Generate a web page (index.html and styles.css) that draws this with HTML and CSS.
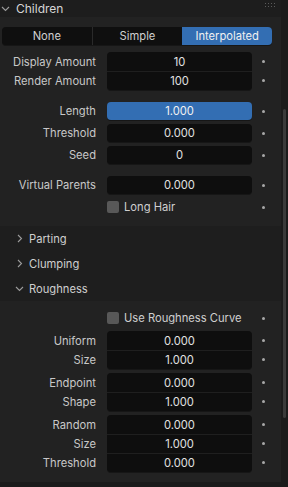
FILE: index.html
```html
<!DOCTYPE html>
<html lang="en">
  <head>
    <meta charset="UTF-8" />
    <title>Children</title>
    <link rel="stylesheet" href="styles.css">
  </head>
  <body>
    <div class="region">
      <div class="panel">
        <!-- Children header -->
        <div class="panel-header">
          <svg class="chev-down" width="9" height="6" viewBox="0 0 9 6"><path d="M1 1 L4.5 4.5 L8 1" /></svg>
          <span class="panel-title">Children</span>
          <div class="grip">
            <span></span><span></span><span></span><span></span>
            <span></span><span></span><span></span><span></span>
          </div>
        </div>

        <div class="panel-body">
          <div class="seg">
            <div class="seg-item">None</div>
            <div class="seg-item">Simple</div>
            <div class="seg-item active">Interpolated</div>
          </div>

          <div class="stack first-stack">
            <div class="row"><div class="label">Display Amount</div><div class="field">10</div><div class="dot"></div></div>
            <div class="row"><div class="label">Render Amount</div><div class="field">100</div><div class="dot"></div></div>
          </div>

          <div class="single gap-big"><div class="label">Length</div><div class="field blue">1.000</div><div class="dot"></div></div>
          <div class="single"><div class="label">Threshold</div><div class="field">0.000</div><div class="dot"></div></div>
          <div class="single"><div class="label">Seed</div><div class="field">0</div><div class="dot"></div></div>

          <div class="single gap-big"><div class="label">Virtual Parents</div><div class="field">0.000</div><div class="dot"></div></div>
          <div class="single check-row"><div class="label"></div><div class="check"><span class="box"></span>Long Hair</div><div class="dot"></div></div>
        </div>

        <!-- Subpanels -->
        <div class="sub-header">
          <svg class="chev-right" width="6" height="9" viewBox="0 0 6 9"><path d="M1 1 L4.5 4.5 L1 8" /></svg>
          <span>Parting</span>
        </div>
        <div class="sub-header">
          <svg class="chev-right" width="6" height="9" viewBox="0 0 6 9"><path d="M1 1 L4.5 4.5 L1 8" /></svg>
          <span>Clumping</span>
        </div>
        <div class="sub-header open">
          <svg class="chev-down sub" width="9" height="6" viewBox="0 0 9 6"><path d="M1 1 L4.5 4.5 L8 1" /></svg>
          <span>Roughness</span>
        </div>

        <div class="sub-body">
          <div class="single check-row first"><div class="label"></div><div class="check"><span class="box"></span>Use Roughness Curve</div><div class="dot"></div></div>

          <div class="stack">
            <div class="row"><div class="label">Uniform</div><div class="field">0.000</div><div class="dot"></div></div>
            <div class="row"><div class="label">Size</div><div class="field">1.000</div><div class="dot"></div></div>
          </div>
          <div class="stack">
            <div class="row"><div class="label">Endpoint</div><div class="field">0.000</div><div class="dot"></div></div>
            <div class="row"><div class="label">Shape</div><div class="field">1.000</div><div class="dot"></div></div>
          </div>
          <div class="stack">
            <div class="row"><div class="label">Random</div><div class="field">0.000</div><div class="dot"></div></div>
            <div class="row"><div class="label">Size</div><div class="field">1.000</div><div class="dot"></div></div>
            <div class="row"><div class="label">Threshold</div><div class="field">0.000</div><div class="dot"></div></div>
          </div>
        </div>
      </div>

      <div class="scrollbar"></div>
    </div>
  </body>
</html>
```

FILE: styles.css
```css
* {
  margin: 0;
  padding: 0;
  box-sizing: border-box;
}

body {
  background: #1b1b1b;
  font-family: Inter, 'DejaVu Sans', sans-serif;
  font-size: 11.2px;
  color: #cfcfcf;
}

.region {
  position: relative;
  width: 288px;
  height: 487px;
  background: #1b1b1b;
  overflow: hidden;
}

.panel {
  width: 281px;
  background: #222222;
}

.panel-header {
  height: 17px;
  background: #1d1d1d;
  display: flex;
  align-items: center;
  position: relative;
}

.panel-title {
  margin-left: 6px;
  font-size: 12px;
  color: #d6d6d6;
}

.chev-down {
  margin-left: 1px;
  fill: none;
  stroke: #9c9c9c;
  stroke-width: 1.1;
}

.chev-down.sub {
  margin-left: 15px;
}

.chev-right {
  margin-left: 17px;
  fill: none;
  stroke: #9c9c9c;
  stroke-width: 1.1;
}

.grip {
  position: absolute;
  right: 6px;
  top: 3px;
  display: grid;
  grid-template-columns: repeat(4, 1px);
  gap: 2px 2px;
}

.grip span {
  width: 1px;
  height: 1px;
  background: #5a5a5a;
}

.panel-body {
  padding: 10px 0 10px 0;
  height: 209px;
  background: #222222;
}

.seg {
  margin: 0 9px 0 2px;
  height: 18px;
  display: flex;
  border-radius: 4px;
  background: #0f0f0f;
  box-shadow: 0 1px 0 #161616;
  overflow: hidden;
}

.seg-item {
  flex: 1;
  display: flex;
  align-items: center;
  justify-content: center;
  color: #cfcfcf;
  border-left: 1px solid #2a2a2a;
}

.seg-item:first-child {
  border-left: none;
}

.seg-item.active {
  background: #336eb3;
  color: #f0f0f0;
  border-left: none;
}

.stack {
  margin-top: 4px;
}

.first-stack {
  margin-top: 7px;
}

.row,
.single {
  display: flex;
  align-items: center;
}

.row {
  height: 19px;
}

.single {
  height: 18px;
  margin-top: 4px;
}

.single.gap-big {
  margin-top: 12px;
}

.label {
  width: 96px;
  text-align: right;
  color: #c8c8c8;
  white-space: nowrap;
}

.field {
  margin-left: 11px;
  width: 145px;
  height: 100%;
  display: flex;
  align-items: center;
  justify-content: center;
  background: #0e0e0e;
  color: #e2e2e2;
}

.single .field {
  border-radius: 4px;
  box-shadow: 0 1px 0 #161616;
}

.field.blue {
  background: #336eb3;
  color: #f2f2f2;
}

.row + .row .field {
  border-top: 1px solid #1f1f1f;
}

.row:first-child .field {
  border-radius: 4px 4px 0 0;
}

.row:last-child .field {
  border-radius: 0 0 4px 4px;
  box-shadow: 0 1px 0 #161616;
}

.dot {
  margin-left: 10px;
  width: 3px;
  height: 3px;
  border-radius: 50%;
  background: #a8a8a8;
}

.check {
  margin-left: 11px;
  width: 145px;
  display: flex;
  align-items: center;
  color: #cfcfcf;
}

.box {
  width: 12px;
  height: 12px;
  border-radius: 2px;
  background: #585858;
  margin-right: 5px;
}

.check-row {
  margin-top: 4px;
}

.sub-header {
  height: 25px;
  background: #1e1e1e;
  display: flex;
  align-items: center;
  color: #cfcfcf;
}

.sub-header span {
  margin-left: 6px;
}

.sub-header.open span {
  margin-left: 5px;
}

.sub-body {
  padding: 4px 0 10px 0;
  background: #222222;
}

.sub-body .check-row.first {
  margin-top: 4px;
}

.scrollbar {
  position: absolute;
  left: 283px;
  top: 109px;
  width: 3px;
  height: 309px;
  border-radius: 2px;
  background: #3a3a3a;
}
```
